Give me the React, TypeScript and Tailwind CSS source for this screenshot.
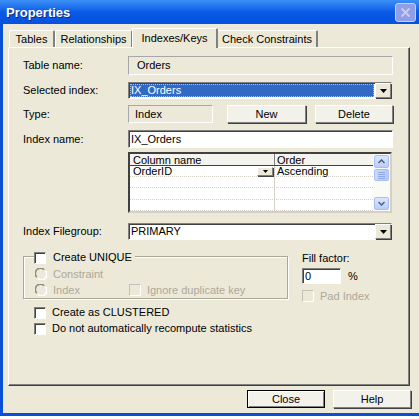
import React from 'react';

const sunken =
  'border border-t-[#808080] border-l-[#808080] border-r-white border-b-white shadow-[inset_1px_1px_0_#404040]';
const sunkenLight =
  'border border-t-[#a7a6aa] border-l-[#a7a6aa] border-r-white border-b-white';
const raised =
  'border border-t-white border-l-white border-r-[#808080] border-b-[#808080] shadow-[1px_1px_0_#404040]';

function DropButton() {
  return (
    <div className={`w-[16px] h-full flex items-center justify-center bg-[#ECE9D8] ${raised}`}>
      <svg width="7" height="4" viewBox="0 0 7 4">
        <polygon points="0,0 7,0 3.5,4" fill="#000" />
      </svg>
    </div>
  );
}

function Combo({ value, selected }: { value: string; selected?: boolean }) {
  return (
    <div className={`w-[264px] h-[17px] bg-white flex ${sunken}`}>
      <div className="flex-1 flex items-center px-[1px] py-[1px]">
        {selected ? (
          <div className="w-full h-full bg-[#316AC5] text-white flex items-center pl-[1px] outline-dotted outline-1 outline-[#a9c0ea] -outline-offset-1">
            {value}
          </div>
        ) : (
          <span className="pl-[1px]">{value}</span>
        )}
      </div>
      <DropButton />
    </div>
  );
}

function CheckBox({ disabled }: { disabled?: boolean }) {
  return (
    <div
      className={
        disabled
          ? 'w-[12px] h-[12px] shrink-0 bg-[#ECE9D8] border border-t-[#c2c0b4] border-l-[#c2c0b4] border-r-white border-b-white'
          : `w-[12px] h-[12px] shrink-0 bg-white ${sunken}`
      }
    />
  );
}

function Radio() {
  return (
    <svg width="12" height="12" viewBox="0 0 12 12" className="shrink-0">
      <circle cx="6" cy="6" r="5" fill="#ECE9D8" />
      <path d="M1.8 9.2 A4.6 4.6 0 0 1 9.2 1.8" stroke="#8e8b7e" strokeWidth="1.6" fill="none" />
      <path d="M10.2 2.8 A4.6 4.6 0 0 1 2.8 10.2" stroke="#ffffff" strokeWidth="1.6" fill="none" />
    </svg>
  );
}

function ScrollArrow({ up }: { up?: boolean }) {
  return (
    <div className="w-[15px] h-[13px] mx-auto rounded-[2px] bg-gradient-to-b from-[#dce7fd] to-[#b9cdf9] border border-[#a7bff0] flex items-center justify-center">
      <svg width="7" height="5" viewBox="0 0 7 5">
        <polyline
          points={up ? '0.5,4 3.5,1 6.5,4' : '0.5,1 3.5,4 6.5,1'}
          stroke="#4d6185"
          strokeWidth="1.5"
          fill="none"
        />
      </svg>
    </div>
  );
}

function IndexGrid() {
  const rows = [
    { col: 'OrderID', order: 'Ascending', h: 'h-[11px]' },
    { col: '', order: '', h: 'h-[11px]' },
    { col: '', order: '', h: 'h-[12px]' },
    { col: '', order: '', h: 'h-[11px]' },
  ];
  return (
    <div className="w-[264px] h-[61px] border-2 border-t-[#404040] border-l-[#404040] border-r-[#d4d0c8] border-b-[#d4d0c8] bg-white flex">
      <div className="flex-1 flex flex-col">
        <div className="h-[12px] flex bg-[#f4f3ee] border-b border-[#404040] leading-[12px]">
          <div className="w-[145px] pl-[3px] border-r border-[#808080]">Column name</div>
          <div className="flex-1 pl-[2px]">Order</div>
        </div>
        {rows.map((r, i) => (
          <div key={i} className={`${r.h} flex border-b border-dotted border-[#d4d0c8] leading-[11px]`}>
            <div className="w-[145px] pl-[3px] border-r border-[#d4d0c8] flex items-start justify-between">
              <span>{r.col}</span>
              {i === 0 && (
                <div className={`w-[16px] h-[9px] mt-[1px] mr-[1px] bg-[#ECE9D8] flex items-center justify-center ${raised}`}>
                  <svg width="5" height="3" viewBox="0 0 5 3">
                    <polygon points="0,0 5,0 2.5,3" fill="#000" />
                  </svg>
                </div>
              )}
            </div>
            <div className="flex-1 pl-[2px]">{r.order}</div>
          </div>
        ))}
      </div>
      <div className="w-[17px] bg-[#fafaf7] flex flex-col py-[1px]">
        <ScrollArrow up />
        <div className="w-[15px] h-[12px] mx-auto mt-[1px] rounded-[2px] bg-gradient-to-r from-[#c9d8fc] to-[#b4cafa] border border-[#a7bff0] flex flex-col items-center justify-center gap-[1px]">
          <div className="w-[7px] h-px bg-[#8fa9e4]" />
          <div className="w-[7px] h-px bg-[#8fa9e4]" />
          <div className="w-[7px] h-px bg-[#8fa9e4]" />
          <div className="w-[7px] h-px bg-[#8fa9e4]" />
        </div>
        <div className="flex-1" />
        <ScrollArrow />
      </div>
    </div>
  );
}

function Label({ children }: { children: React.ReactNode }) {
  return <div className="w-[105px] shrink-0">{children}</div>;
}

export default function App() {
  const tabs = [
    { label: 'Tables', w: 'w-[46px]' },
    { label: 'Relationships', w: 'w-[78px]' },
    { label: 'Indexes/Keys', w: 'w-[86px]', active: true },
    { label: 'Check Constraints', w: 'w-[101px]' },
  ];

  return (
    <div className="w-[419px] h-[419px] bg-white overflow-hidden font-['Liberation_Sans',Arial,sans-serif] text-[11px] leading-[13px] text-black">
      <div className="h-[416px] flex flex-col bg-[#0a4fd8] pl-[3px] pb-[3px]">
        {/* title bar */}
        <div className="h-[24px] -ml-[3px] flex items-center justify-between bg-gradient-to-b from-[#3d8ff7] via-[#0a5ae6] to-[#0451de]">
          <span className="pl-[6px] text-white font-bold text-[13px] [text-shadow:1px_1px_0_#0a2a80]">
            Properties
          </span>
          <div className="w-[21px] h-[19px] mr-[3px] rounded-[3px] bg-[#8f9ee6] border border-[#c9d0f2] flex items-center justify-center">
            <svg width="11" height="11" viewBox="0 0 11 11">
              <path d="M1.5 1.5 L9.5 9.5 M9.5 1.5 L1.5 9.5" stroke="#c6cdf0" strokeWidth="2" />
            </svg>
          </div>
        </div>

        {/* body */}
        <div className="flex-1 bg-[#ECE9D8] flex flex-col">
          {/* tabs */}
          <div className="h-[23px] pl-[6px] flex items-end">
            {tabs.map((t) =>
              t.active ? (
                <div
                  key={t.label}
                  className={`${t.w} h-[20px] -mb-px -mx-[1px] relative z-10 bg-[#ECE9D8] border-t border-l border-white border-r-2 border-r-[#808080] rounded-t-[2px] flex items-start justify-center pt-[3px]`}
                >
                  {t.label}
                </div>
              ) : (
                <div
                  key={t.label}
                  className={`${t.w} h-[17px] bg-[#ECE9D8] border-t border-l border-white border-r-2 border-r-[#808080] rounded-t-[2px] flex items-center justify-center`}
                >
                  {t.label}
                </div>
              ),
            )}
          </div>

          {/* tab panel */}
          <div className="ml-[5px] w-[402px] h-[339px] border border-t-white border-l-white border-r-[#404040] border-b-[#404040] shadow-[inset_-1px_-1px_0_#808080] pl-[14px] pt-[8px] flex flex-col">
            <div className="flex items-center">
              <Label>Table name:</Label>
              <div className={`w-[265px] h-[19px] flex items-center pl-[8px] ${sunkenLight}`}>Orders</div>
            </div>

            <div className="flex items-center mt-[7px]">
              <Label>Selected index:</Label>
              <Combo value="IX_Orders" selected />
            </div>

            <div className="flex items-center mt-[6px]">
              <Label>Type:</Label>
              <div className={`w-[85px] h-[18px] flex items-center pl-[6px] ${sunkenLight}`}>Index</div>
              <button className={`ml-[14px] w-[79px] h-[18px] bg-[#f2f1ea] ${raised}`}>New</button>
              <button className={`ml-[9px] w-[78px] h-[18px] bg-[#f2f1ea] ${raised}`}>Delete</button>
            </div>

            <div className="flex items-center mt-[7px]">
              <Label>Index name:</Label>
              <div className={`w-[265px] h-[18px] bg-white flex items-center pl-[2px] ${sunken}`}>IX_Orders</div>
            </div>

            <div className="flex mt-[4px]">
              <Label>{''}</Label>
              <IndexGrid />
            </div>

            <div className="flex items-center mt-[10px]">
              <Label>Index Filegroup:</Label>
              <Combo value="PRIMARY" />
            </div>

            {/* options */}
            <div className="flex items-start h-[59px]">
              <div className="relative mt-[16px] w-[265px] h-[43px] border border-[#aca899] shadow-[inset_1px_1px_0_#fff,1px_1px_0_#fff] pt-[10px] pl-[11px] flex flex-col gap-[2px]">
                <div className="absolute -top-[6px] left-[10px] bg-[#ECE9D8] pr-[3px] flex items-center gap-[7px] h-[13px]">
                  <CheckBox />
                  <span>Create UNIQUE</span>
                </div>
                <div className="h-[14px] flex items-center gap-[6px] text-[#aca899]">
                  <Radio />
                  <span>Constraint</span>
                </div>
                <div className="h-[14px] flex items-center text-[#aca899]">
                  <Radio />
                  <span className="ml-[6px]">Index</span>
                  <div className="ml-[49px] flex items-center gap-[6px]">
                    <CheckBox disabled />
                    <span>Ignore duplicate key</span>
                  </div>
                </div>
              </div>

              <div className="ml-[14px] mt-[11px] flex flex-col">
                <div className="h-[14px] flex items-center">Fill factor:</div>
                <div className="mt-[3px] flex items-center">
                  <div className={`w-[39px] h-[16px] bg-white flex items-center pl-[2px] ${sunken}`}>0</div>
                  <span className="ml-[7px]">%</span>
                </div>
                <div className="mt-[6px] h-[12px] flex items-center gap-[6px] text-[#aca899]">
                  <CheckBox disabled />
                  <span>Pad Index</span>
                </div>
              </div>
            </div>

            <div className="mt-[7px] pl-[11px] h-[13px] flex items-center gap-[6px]">
              <CheckBox />
              <span>Create as CLUSTERED</span>
            </div>
            <div className="mt-[3px] pl-[11px] h-[13px] flex items-center gap-[6px]">
              <CheckBox />
              <span>Do not automatically recompute statistics</span>
            </div>
          </div>

          {/* dialog buttons */}
          <div className="mt-[4px] pl-[244px] flex gap-[8px]">
            <button className="w-[78px] h-[18px] bg-[#f2f1ea] border border-black shadow-[inset_1px_1px_0_#fff,inset_-1px_-1px_0_#808080]">
              Close
            </button>
            <button className={`w-[78px] h-[18px] bg-[#f2f1ea] ${raised}`}>Help</button>
          </div>
        </div>
      </div>
    </div>
  );
}
